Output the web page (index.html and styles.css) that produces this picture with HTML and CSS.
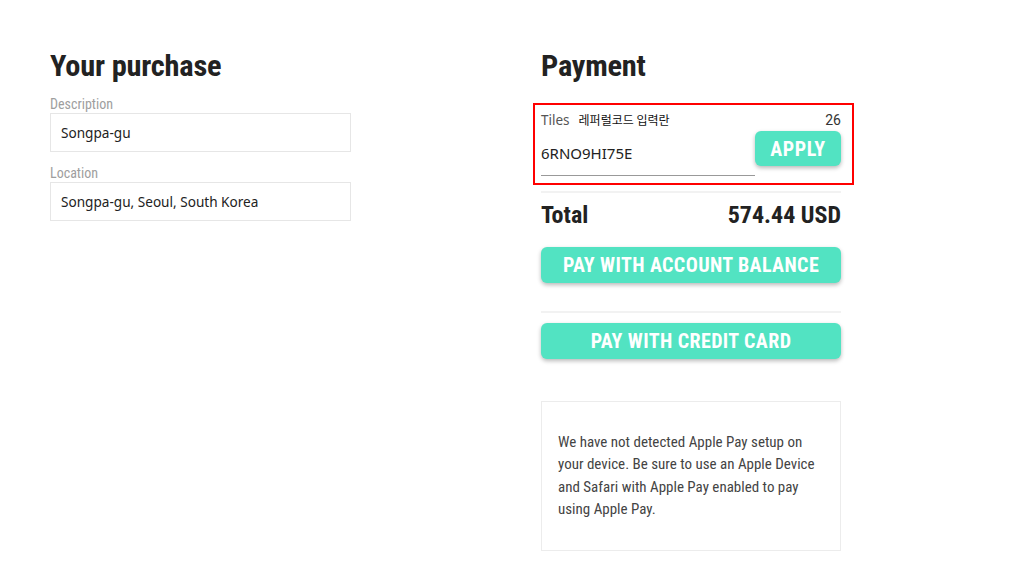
FILE: index.html
```html
<!DOCTYPE html>
<html lang="en">
<head>
<meta charset="utf-8">
<title>Checkout</title>
<link rel="stylesheet" href="styles.css">
</head>
<body>
<main class="page">
  <section class="col col-left">
    <h1 class="title">Your purchase</h1>
    <label class="field-label">Description</label>
    <div class="field">Songpa-gu</div>
    <label class="field-label">Location</label>
    <div class="field">Songpa-gu, Seoul, South Korea</div>
  </section>
  <section class="col col-right">
    <h1 class="title">Payment</h1>
    <div class="referral">
      <div class="referral-head">
        <span class="tiles">Tiles</span>
        <span class="ko">레퍼럴코드 입력란</span>
        <span class="count">26</span>
      </div>
      <div class="referral-row">
        <div class="code">6RNO9HI75E</div>
        <button class="btn btn-apply">APPLY</button>
      </div>
    </div>
    <hr class="sep">
    <div class="total">
      <span>Total</span>
      <span>574.44 USD</span>
    </div>
    <button class="btn btn-wide">PAY WITH ACCOUNT BALANCE</button>
    <hr class="sep sep-mid">
    <button class="btn btn-wide">PAY WITH CREDIT CARD</button>
    <div class="applepay">
      We have not detected Apple Pay setup on your device. Be sure to use an Apple Device and Safari with Apple Pay enabled to pay using Apple Pay.
    </div>
  </section>
</main>
</body>
</html>
```
FILE: styles.css
```css
* { box-sizing: border-box; }
html, body { margin: 0; padding: 0; background: #fff; }
body { font-family: "Roboto", "Liberation Sans", sans-serif; color: #222; }
.page {
  display: flex;
  padding: 50px 0 0 50px;
  gap: 190px;
}
.col-left { width: 301px; }
.col-right { width: 300px; }
.title {
  margin: 0 0 14px;
  font-size: 30.4px;
  line-height: 32px;
  font-weight: 700;
  font-stretch: 75%;
  color: #222;
  letter-spacing: -0.2px;
}
.field-label {
  display: block;
  font-size: 14px;
  font-stretch: 75%;
  color: #9e9e9e;
  line-height: 16px;
  margin-bottom: 1px;
}
.field {
  border: 1px solid #e6e6e6;
  height: 39px;
  padding: 0 10px;
  display: flex;
  align-items: center;
  font-family: "Noto Sans", "Open Sans", sans-serif;
  font-size: 13.6px;
  color: #222;
  margin-bottom: 13px;
}
.referral {
  border: 2px solid #f00;
  margin: 21px -13px 0 -8px;
  padding: 6px 11px 7px 6px;
}
.referral-head {
  display: flex;
  align-items: baseline;
  font-size: 13px;
  line-height: 18px;
}
.tiles { font-family: "Noto Sans", "Open Sans", sans-serif; color: #555; font-size: 13.5px; }
.ko { font-family: "Noto Sans CJK KR", sans-serif; font-size: 12px; margin-left: 9px; color: #111; }
.count { margin-left: auto; font-size: 14px; color: #333; }
.referral-row {
  display: flex;
  align-items: flex-end;
}
.code {
  flex: 1;
  border-bottom: 1px solid #999;
  font-family: "Noto Sans", "Open Sans", sans-serif;
  font-size: 15px;
  color: #222;
  padding: 14px 0 12px;
  line-height: 20px;
}
.btn {
  border: 0;
  background: #52e3c2;
  color: #fff;
  font-family: "Roboto", sans-serif;
  font-weight: 700;
  font-stretch: 75%;
  border-radius: 6px;
  box-shadow: 0 2px 4px rgba(0,0,0,0.28);
  cursor: pointer;
}
.btn-apply {
  width: 86px;
  height: 35px;
  font-size: 20px;
  letter-spacing: 0.6px;
  margin-bottom: 10px;
}
.sep {
  border: 0;
  border-top: 2px solid #f2f2f2;
  margin: 6px 0 0;
}
.total {
  display: flex;
  justify-content: space-between;
  font-size: 24px;
  font-weight: 700;
  font-stretch: 75%;
  line-height: 26px;
  margin: 9px 0 19px;
  color: #222;
}
.btn-wide {
  display: block;
  width: 100%;
  height: 36px;
  font-size: 20px;
  letter-spacing: 0.4px;
}
.sep-mid { margin: 28px 0 10px; }
.applepay {
  margin-top: 42px;
  border: 1px solid #ececec;
  padding: 29px 16px 30px;
  font-size: 15px;
  font-stretch: 75%;
  line-height: 22.3px;
  color: #444;
}
```
